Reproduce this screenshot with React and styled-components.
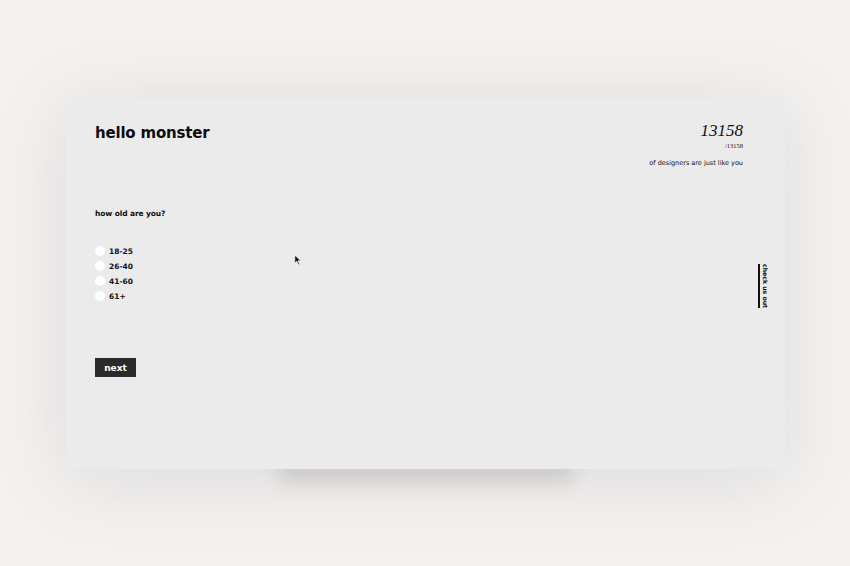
import styled, { createGlobalStyle } from 'styled-components';

const Global = createGlobalStyle`
    html {
        background: #f3f2f1;
    }
    body {
        margin: 0;
        padding: 0;
        font-family: 'DejaVu Sans', 'Liberation Sans', sans-serif;
    }
`;

const options = ["18-25", "26-40", "41-60", "61+"];

export default function App() {
    return (
        <>
            <Global />
            <Page>
                <Card>
                    <Header>
                        <Title>hello monster</Title>
                        <Counter>
                            <Big>13158</Big>
                            <Small>/13158</Small>
                            <Caption>of designers are just like you</Caption>
                        </Counter>
                    </Header>
                    <Question>how old are you?</Question>
                    <Options>
                        {options.map((o) => (
                            <Option key={o}>
                                <Radio />
                                <span>{o}</span>
                            </Option>
                        ))}
                    </Options>
                    <Next>next</Next>
                    <SideLink>check us out</SideLink>
                    <Cursor viewBox="0 0 10 14" width="8" height="12">
                        <path d="M1 1 L1 11 L3.5 8.5 L5.5 13 L7 12.3 L5 8 L8.5 8 Z" fill="#111" stroke="#fff" strokeWidth="0.8" />
                    </Cursor>
                </Card>
            </Page>
        </>
    );
}

const Page = styled.div`
    width: 850px;
    height: 566px;
    padding: 98px 0 0 66px;
    box-sizing: border-box;
    overflow: hidden;
`;

const Card = styled.div`
    position: relative;
    width: 719px;
    height: 371px;
    box-sizing: border-box;
    padding: 24px 42px 0 29px;
    background: #ebebeb;
    box-shadow: 0 10px 70px rgba(120, 105, 100, 0.16);
    display: flex;
    flex-direction: column;
    &::after {
        content: "";
        position: absolute;
        left: 212px;
        right: 212px;
        bottom: 4px;
        height: 24px;
        box-shadow: 0 16px 20px rgba(80, 70, 65, 0.18);
        z-index: -1;
    }
`;

const Header = styled.div`
    display: flex;
    justify-content: space-between;
    align-items: flex-start;
`;

const Title = styled.h1`
    margin: 0;
    font-size: 15px;
    line-height: 22px;
    font-weight: 700;
    color: #0d0d0d;
    letter-spacing: -0.2px;
`;

const Counter = styled.div`
    display: flex;
    flex-direction: column;
    align-items: flex-end;
    margin-top: -1px;
`;

const Big = styled.div`
    font-family: 'Liberation Serif', serif;
    font-style: italic;
    font-size: 17px;
    line-height: 20px;
    color: #111;
`;

const Small = styled.div`
    font-family: 'Liberation Serif', serif;
    font-size: 6.5px;
    line-height: 9px;
    color: #222;
`;

const Caption = styled.div`
    margin-top: 9px;
    font-size: 6.5px;
    line-height: 9px;
    color: #111;
`;

const Question = styled.div`
    margin-top: 40px;
    font-size: 7.5px;
    font-weight: 700;
    line-height: 12px;
    color: #0d0d0d;
    letter-spacing: -0.1px;
`;

const Options = styled.div`
    margin-top: 26px;
    display: flex;
    flex-direction: column;
    gap: 5px;
`;

const Option = styled.label`
    display: flex;
    align-items: center;
    gap: 4px;
    height: 10px;
    font-size: 7.5px;
    font-weight: 700;
    color: #111;
`;

const Radio = styled.span`
    width: 10px;
    height: 10px;
    border-radius: 50%;
    background: #fff;
`;

const Next = styled.button`
    margin-top: 57px;
    align-self: flex-start;
    width: 41px;
    height: 19px;
    border: none;
    padding: 0;
    background: #2a2a2a;
    color: #fff;
    font-family: 'DejaVu Sans', sans-serif;
    font-size: 9px;
    font-weight: 700;
`;

const SideLink = styled.div`
    position: absolute;
    top: 166px;
    left: 692px;
    writing-mode: vertical-rl;
    font-size: 6.2px;
    font-weight: 700;
    line-height: 8px;
    color: #111;
    border-left: 2px solid #111;
    padding-left: 1px;
`;

const Cursor = styled.svg`
    position: absolute;
    left: 228px;
    top: 156px;
`;
